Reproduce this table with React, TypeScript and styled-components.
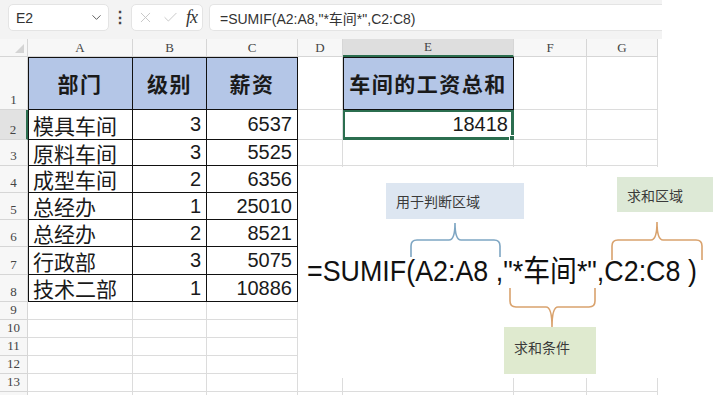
import styled, { createGlobalStyle, css } from "styled-components";
import { ChevronDown, X, Check } from "lucide-react";

const GlobalStyle = createGlobalStyle`
  html, body { margin: 0; padding: 0; background: #fff; overflow: hidden; }
  body { font-family: "Liberation Sans", "Noto Sans CJK SC", sans-serif; color: #1a1a1a; }
`;

const GREEN = "#2b6e4f";
const GRID = "#dcdcdc";

const Page = styled.div`
  width: 662px;
  height: 395px;
  background: #fff;
`;

const Toolbar = styled.div`
  height: 39px;
  box-sizing: border-box;
  display: flex;
  align-items: flex-start;
  padding: 4px 0 0 8px;
  background: #f3f3f3;
`;

const Field = styled.div<{ $w: number }>`
  width: ${({ $w }) => $w}px;
  height: 27px;
  box-sizing: border-box;
  display: flex;
  align-items: center;
  background: #fff;
  border: 1px solid #e4e4e4;
  border-radius: 5px;
  font-size: 14px;
  color: #333;
`;

const NameBox = styled(Field)`
  justify-content: space-between;
  padding: 0 4px 0 7px;
`;

const FormulaBox = styled(Field)`
  margin-left: 6px;
  padding-left: 10px;
  border-right: none;
  border-radius: 5px 0 0 5px;
  white-space: pre;
`;

const ActionBox = styled(Field)`
  justify-content: space-between;
  padding: 0 5px 0 5px;
  color: #c4c4c4;
`;

const Dots = styled.div`
  width: 22px;
  height: 27px;
  display: flex;
  align-items: center;
  justify-content: center;
  font-size: 16px;
  font-weight: bold;
  color: #444;
`;

const Fx = styled.span`
  font-family: "Liberation Serif", serif;
  font-style: italic;
  font-size: 18px;
  color: #333;
  letter-spacing: -1px;
`;

const Sheet = styled.div`
  position: relative;
`;

const Grid = styled.div`
  display: grid;
  grid-template-columns: 28px 105px 74px 91px 45px 171px 73px 71px;
  grid-template-rows: 18px 53px 30px 26px 27px 27px 27px 28px 27px repeat(6, 18px);
`;

type CellProps = {
  $head?: boolean;
  $sel?: "col" | "row";
  $box?: boolean;
  $top?: boolean;
  $left?: boolean;
  $fill?: string;
  $align?: "left" | "right" | "center";
  $bold?: boolean;
  $size?: number;
  $active?: boolean;
};

const Cell = styled.div<CellProps>`
  position: relative;
  box-sizing: border-box;
  display: flex;
  align-items: center;
  overflow: visible;
  white-space: nowrap;
  border-right: 1px solid ${({ $box }) => ($box ? "#111" : GRID)};
  border-bottom: 1px solid ${({ $box }) => ($box ? "#111" : GRID)};
  background: ${({ $fill }) => $fill || "#fff"};
  font-size: ${({ $size }) => $size || 21}px;
  font-weight: ${({ $bold }) => ($bold ? 700 : 400)};
  letter-spacing: ${({ $bold }) => ($bold ? "1.5px" : "0")};
  justify-content: ${({ $align }) =>
    $align === "right" ? "flex-end" : $align === "center" ? "center" : "flex-start"};
  padding: 0 5px;
  ${({ $top, $left }) =>
    ($top || $left) &&
    css`
      box-shadow: ${[$top && "inset 0 1px 0 #111", $left && "inset 1px 0 0 #111"].filter(Boolean).join(", ")};
    `}
  ${({ $head }) =>
    $head &&
    css`
      font-family: "Liberation Serif", serif;
      font-size: 13px;
      color: #444;
      padding: 0;
      background: #f7f7f7;
      border-color: #d6d6d6;
    `}
  ${({ $sel }) =>
    $sel === "col" &&
    css`
      background: #dedede;
      border-bottom: 2px solid ${GREEN};
    `}
  ${({ $sel }) =>
    $sel === "row" &&
    css`
      background: #e2e2e2;
      border-right: 2px solid ${GREEN};
    `}
  ${({ $active }) =>
    $active &&
    css`
      border-color: ${GREEN};
      box-shadow: inset 0 0 0 2px ${GREEN};
      &::after {
        content: "";
        position: absolute;
        right: -3px;
        bottom: -3px;
        width: 5px;
        height: 5px;
        background: ${GREEN};
        border: 1px solid #fff;
      }
    `}
`;

const RowNum = styled(Cell)`
  align-items: flex-end;
  justify-content: center;
  padding-bottom: 1px;
  font-size: 13px;
`;

const Corner = styled(Cell)`
  &::before {
    content: "";
    position: absolute;
    right: 3px;
    bottom: 3px;
    border-left: 9px solid transparent;
    border-bottom: 9px solid #d4d4d4;
  }
`;

const Annotation = styled.div`
  position: absolute;
  left: 298px;
  top: 128px;
  width: 422px;
  height: 211px;
  background: #fff;
`;

const Callout = styled.div<{ $x: number; $y: number; $w: number; $h: number; $bg: string; $pt?: number }>`
  position: absolute;
  left: ${({ $x }) => $x}px;
  top: ${({ $y }) => $y}px;
  width: ${({ $w }) => $w}px;
  height: ${({ $h }) => $h}px;
  box-sizing: border-box;
  background: ${({ $bg }) => $bg};
  padding: ${({ $pt }) => ($pt ? `${$pt}px 0 0 10px` : "0 0 0 10px")};
  display: flex;
  align-items: ${({ $pt }) => ($pt ? "flex-start" : "center")};
  font-family: "Noto Sans CJK SC", sans-serif;
  font-size: 14px;
  color: #3a3a3a;
`;

const BigFormula = styled.div`
  position: absolute;
  left: 9px;
  top: 89px;
  font-family: "Liberation Sans", "Noto Sans CJK SC", sans-serif;
  font-size: 30px;
  line-height: 1;
  color: #111;
  white-space: pre;
  transform: scaleX(0.895);
  transform-origin: left top;
`;

const Braces = styled.svg`
  position: absolute;
  left: 0;
  top: 0;
`;

const COLS = ["A", "B", "C", "D", "E", "F", "G"];

const data: [string, number, number][] = [
  ["模具车间", 3, 6537],
  ["原料车间", 3, 5525],
  ["成型车间", 2, 6356],
  ["总经办", 1, 25010],
  ["总经办", 2, 8521],
  ["行政部", 3, 5075],
  ["技术二部", 1, 10886],
];

const HEAD_FILL = "#b4c6e7";

export default function App() {
  const cells: JSX.Element[] = [];
  cells.push(<Corner key="corner" $head />);
  COLS.forEach((c) =>
    cells.push(
      <Cell key={"h" + c} $head $align="center" $sel={c === "E" ? "col" : undefined}>
        {c}
      </Cell>
    )
  );

  // row 1: headers
  cells.push(<RowNum key="r1" $head>1</RowNum>);
  ["部门", "级别", "薪资"].forEach((t, i) =>
    cells.push(
      <Cell key={"t" + i} $box $top $left={i === 0} $fill={HEAD_FILL} $bold $align="center">
        {t}
      </Cell>
    )
  );
  cells.push(<Cell key="d1" />);
  cells.push(
    <Cell key="e1" $box $top $left $fill={HEAD_FILL} $bold $align="center">
      车间的工资总和
    </Cell>
  );
  cells.push(<Cell key="f1" />, <Cell key="g1" />);

  data.forEach(([dept, lvl, pay], i) => {
    const r = i + 2;
    cells.push(
      <RowNum key={"r" + r} $head $sel={r === 2 ? "row" : undefined}>
        {r}
      </RowNum>
    );
    cells.push(
      <Cell key={"a" + r} $box $left>
        {dept}
      </Cell>,
      <Cell key={"b" + r} $box $align="right" $size={20}>
        {lvl}
      </Cell>,
      <Cell key={"c" + r} $box $align="right" $size={20}>
        {pay}
      </Cell>,
      <Cell key={"d" + r} />
    );
    if (r === 2) {
      cells.push(
        <Cell key="e2" $active $align="right" $size={20}>
          18418
        </Cell>
      );
    } else {
      cells.push(<Cell key={"e" + r} />);
    }
    cells.push(<Cell key={"f" + r} />, <Cell key={"g" + r} />);
  });

  // empty rows below the table; the last one is only a sliver at the edge
  for (let r = 9; r <= 14; r++) {
    cells.push(
      <RowNum key={"r" + r} $head>
        {r < 14 ? r : ""}
      </RowNum>
    );
    COLS.forEach((c) => cells.push(<Cell key={c + r} />));
  }

  return (
    <Page>
      <GlobalStyle />
      <Toolbar>
        <NameBox $w={101}>
          E2
          <ChevronDown size={15} strokeWidth={1.5} color="#555" />
        </NameBox>
        <Dots>⋮</Dots>
        <ActionBox $w={72}>
          <X size={17} strokeWidth={1.3} />
          <Check size={17} strokeWidth={1.3} />
          <Fx>fx</Fx>
        </ActionBox>
        <FormulaBox $w={453}>=SUMIF(A2:A8,"*车间*",C2:C8)</FormulaBox>
      </Toolbar>
      <Sheet>
        <Grid>{cells}</Grid>
        <Annotation>
          <Callout $x={88} $y={16} $w={138} $h={36} $bg="#dde6f1">
            用于判断区域
          </Callout>
          <Callout $x={319} $y={10} $w={96} $h={35} $bg="#dde9d6">
            求和区域
          </Callout>
          <Callout $x={206} $y={160} $w={92} $h={47} $bg="#dfeacf" $pt={10}>
            求和条件
          </Callout>
          <Braces width={422} height={211} viewBox="0 0 422 211" fill="none" strokeWidth={1.6}>
            <path
              d="M113 90 V79 Q113 73 119 73 H151 Q157 73 157 56 Q157 73 163 73 H196 Q202 73 202 79 V90"
              stroke="#7ea6c3"
            />
            <path
              d="M212 121 V134 Q212 140 218 140 H248 Q254 140 254 160 Q254 140 260 140 H291 Q297 140 297 134 V121"
              stroke="#d9a26d"
            />
            <path
              d="M314 93 V79 Q314 73 320 73 H353 Q359 73 359 55 Q359 73 365 73 H398 Q404 73 404 79 V93"
              stroke="#d9a26d"
            />
          </Braces>
          <BigFormula>=SUMIF(A2:A8 ,"*车间*",C2:C8 )</BigFormula>
        </Annotation>
      </Sheet>
    </Page>
  );
}
